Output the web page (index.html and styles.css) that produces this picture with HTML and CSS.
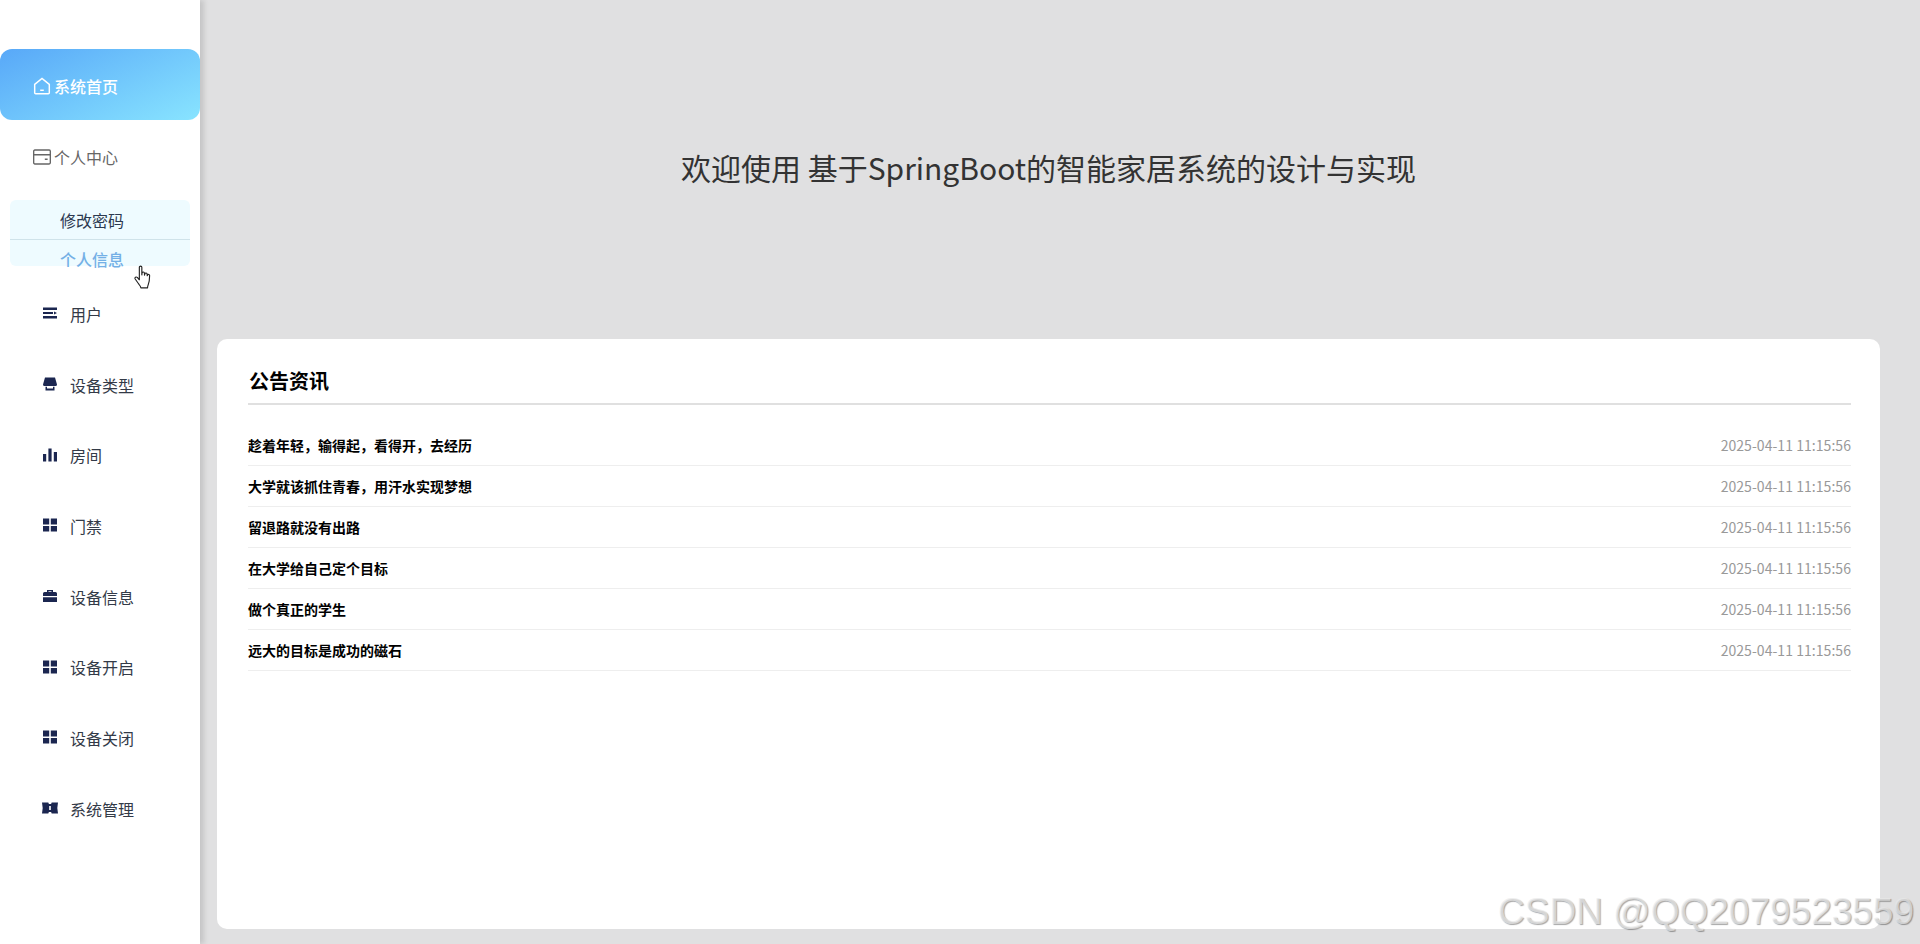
FILE: index.html
```html
<!DOCTYPE html>
<html lang="zh-CN">
<head>
    <meta charset="UTF-8">
    <meta name="viewport" content="width=device-width, initial-scale=1.0">
    <title>基于SpringBoot的智能家居系统的设计与实现</title>
    <link rel="stylesheet" href="styles.css">
</head>
<body>
    <aside class="sidebar">
        <a class="top-item active">
            <svg class="top-icon" viewBox="0 0 16 16" fill="none" stroke="currentColor" stroke-width="1.300"><path d="M1.500 6.600 8 1.200l6.500 5.400v7.400a.9.9 0 0 1-.9.9H2.400a.9.9 0 0 1-.9-.9z"/><path d="M6.400 11.800h3.200"/></svg>
            系统首页
        </a>
        <a class="top-item">
            <svg class="top-icon" viewBox="0 0 16 16" fill="none" stroke="currentColor" stroke-width="1.200"><rect x="0.600" y="1.800" width="14.800" height="12.400" rx="1"/><path d="M.6 6h14.800M10.500 10h2.500"/></svg>
            个人中心
        </a>
        <div class="submenu">
            <a class="sub-item">修改密码</a>
            <a class="sub-item current">个人信息</a>
        </div>
        <a class="menu-item">
            <svg class="menu-icon" viewBox="0 0 14 14"><path d="M0 1.500h14v2.400H0zM0 5.900h10v2.200H0zM11 5.400 14 7l-3 1.600zM0 10.100h14v2.400H0z"/></svg>
            用户
        </a>
        <a class="menu-item">
            <svg class="menu-icon" viewBox="0 0 14 14"><path d="M2 .5h10l2 7a1.500 1.500 0 0 1-1.500 1.500h-11A1.500 1.500 0 0 1 0 7.500zM2.500 9.800h1.500v1.700h6V9.800h1.500v3.700h-9z"/></svg>
            设备类型
        </a>
        <a class="menu-item">
            <svg class="menu-icon" viewBox="0 0 14 14"><path d="M0 6h3.200v7.500H0zM5.400 .5h3.200v13H5.400zM10.800 4h3.200v9.500h-3.200z"/></svg>
            房间
        </a>
        <a class="menu-item">
            <svg class="menu-icon" viewBox="0 0 14 14"><use href="#grid"/></svg>
            门禁
        </a>
        <a class="menu-item">
            <svg class="menu-icon" viewBox="0 0 14 14"><path d="M4 3V1h6v2h2.500A1.500 1.500 0 0 1 14 4.500V7H0V4.500A1.500 1.500 0 0 1 1.500 3zm1.500 0h3V2.300h-3zM0 8.200h14V13H0z"/></svg>
            设备信息
        </a>
        <a class="menu-item">
            <svg class="menu-icon" viewBox="0 0 14 14"><use href="#grid"/></svg>
            设备开启
        </a>
        <a class="menu-item">
            <svg class="menu-icon" viewBox="0 0 14 14"><use href="#grid"/></svg>
            设备关闭
        </a>
        <a class="menu-item">
            <svg class="menu-icon wide" viewBox="0 0 16 14"><path fill-rule="evenodd" d="M0 1.500h6.300l.6 1.600h2.200l.6-1.600H16l-.7 5.500.7 5.500H9.700l-.6-1.600H6.900l-.6 1.600H0L.7 7zM7.200 5v4h1.600V5z"/></svg>
            系统管理
        </a>
    </aside>

    <main class="content">
        <div class="welcome">欢迎使用 基于SpringBoot的智能家居系统的设计与实现</div>
        <section class="notice-card">
            <h2 class="notice-title">公告资讯</h2>
            <ul class="notice-list">
                <li><span class="notice-name">趁着年轻，输得起，看得开，去经历</span><span class="notice-time">2025-04-11 11:15:56</span></li>
                <li><span class="notice-name">大学就该抓住青春，用汗水实现梦想</span><span class="notice-time">2025-04-11 11:15:56</span></li>
                <li><span class="notice-name">留退路就没有出路</span><span class="notice-time">2025-04-11 11:15:56</span></li>
                <li><span class="notice-name">在大学给自己定个目标</span><span class="notice-time">2025-04-11 11:15:56</span></li>
                <li><span class="notice-name">做个真正的学生</span><span class="notice-time">2025-04-11 11:15:56</span></li>
                <li><span class="notice-name">远大的目标是成功的磁石</span><span class="notice-time">2025-04-11 11:15:56</span></li>
            </ul>
        </section>
    </main>

    <!-- mouse pointer caught in the screenshot -->
    <svg class="pointer" viewBox="0 0 18 26" fill="#fff" stroke="#222" stroke-width="1.100" stroke-linejoin="round">
        <path d="M5 2.200c0-1.500 2.400-1.500 2.400 0v7.300l.2-1.800c.2-1.300 2.200-1.200 2.300.1l.1 2 .3-1.300c.3-1.200 2.100-1 2.200.3l.1 1.600.3-.7c.5-1 2-.7 2 .5 0 3-.3 6.500-1.500 9.200-.3.800-.5 1.500-.5 2.600H6.500c-.3-1.700-1.500-2.700-2.600-4.400L1 13.500c-.8-1.300.9-2.600 2-1.500l2 2.200z"/>
    </svg>

    <div class="watermark">CSDN @QQ2079523559</div>

    <svg class="svg-defs" width="0" height="0">
        <defs>
            <path id="grid" d="M0 .5h6.200v6H0zM7.800 .5H14v6H7.800zM0 8h6.200v5.500H0zM7.800 8H14v5.500H7.800z"/>
        </defs>
    </svg>
</body>
</html>
```

FILE: styles.css
```css
* {
    box-sizing: border-box;
}
html, body {
    height: 100%;
}
body {
    margin: 0;
    display: flex;
    overflow: hidden;
    background-color: #e0e0e1;
    color: #333;
    font-family: "Noto Sans CJK SC", "Noto Sans", sans-serif;
}
.sidebar {
    flex: 0 0 200px;
    height: 944px;
    padding-top: 49px;
    background-color: #fff;
    box-shadow: 4px 0 5px rgba(0, 0, 0, 0.12);
    position: relative;
}
.top-item {
    display: flex;
    align-items: center;
    gap: 3px;
    height: 71px;
    padding: 3px 0 0 33px;
    font-size: 16px;
    color: #666;
}
.top-item.active {
    background: linear-gradient(155deg, #58a8f8, #88e4ff);
    border-radius: 12px;
    color: #fff;
    font-weight: 500;
}
.top-icon {
    width: 18px;
    height: 18px;
}
.submenu {
    margin: 9px 10px 0;
    height: 66px;
    background-color: #eefbff;
    border-radius: 6px;
    font-size: 16px;
}
.sub-item {
    display: block;
    height: 40px;
    padding-left: 50px;
    line-height: 40px;
    color: #2b3950;
    border-bottom: 1px solid #cfe3ea;
}
.sub-item.current {
    height: 26px;
    line-height: 38px;
    color: #74b0e6;
    border-bottom: 0;
    font-weight: 500;
}
.menu-item {
    display: flex;
    align-items: center;
    gap: 13px;
    height: 70.7px;
    padding: 25px 0 0 43px;
    font-size: 16px;
    color: #333a47;
}
.menu-icon {
    width: 14px;
    height: 14px;
    fill: #1b2650;
    margin-top: -1px;
}
.menu-icon.wide {
    width: 16px;
    margin-left: -1px;
    margin-right: -1px;
}
.content {
    flex: 1;
    height: 944px;
    padding: 0 40px 15px 17px;
    display: flex;
    flex-direction: column;
}
.welcome {
    flex: 0 0 339px;
    padding-bottom: 6px;
    display: flex;
    justify-content: center;
    align-items: center;
    font-size: 30px;
    color: #333;
}
.notice-card {
    flex: 1;
    padding: 24px 29px 0 31px;
    background-color: #fff;
    border-radius: 10px;
}
.notice-title {
    margin: 0 0 0 1px;
    height: 40px;
    line-height: 36px;
    font-size: 20px;
    font-weight: 700;
    color: #000;
}
.notice-list {
    margin: 0;
    padding: 20px 0 0;
    list-style: none;
    border-top: 2px solid #e0e0e0;
}
.notice-list li {
    display: flex;
    justify-content: space-between;
    align-items: center;
    height: 41px;
    border-bottom: 1px solid #eee;
    font-size: 14px;
}
.notice-name {
    font-weight: 700;
    color: #000;
}
.notice-time {
    color: #999;
    letter-spacing: 0.05px;
}
.pointer {
    position: absolute;
    left: 134px;
    top: 265px;
    width: 19px;
    height: 27px;
}
.watermark {
    position: absolute;
    left: 1498px;
    top: 891px;
    font-family: "Liberation Sans", Arial, sans-serif;
    font-size: 37px;
    line-height: 42px;
    white-space: nowrap;
    color: rgba(235, 235, 235, 0.7);
    text-shadow: 1px 1px 1px rgba(0, 0, 0, 0.35);
}
.svg-defs {
    position: absolute;
}
```
